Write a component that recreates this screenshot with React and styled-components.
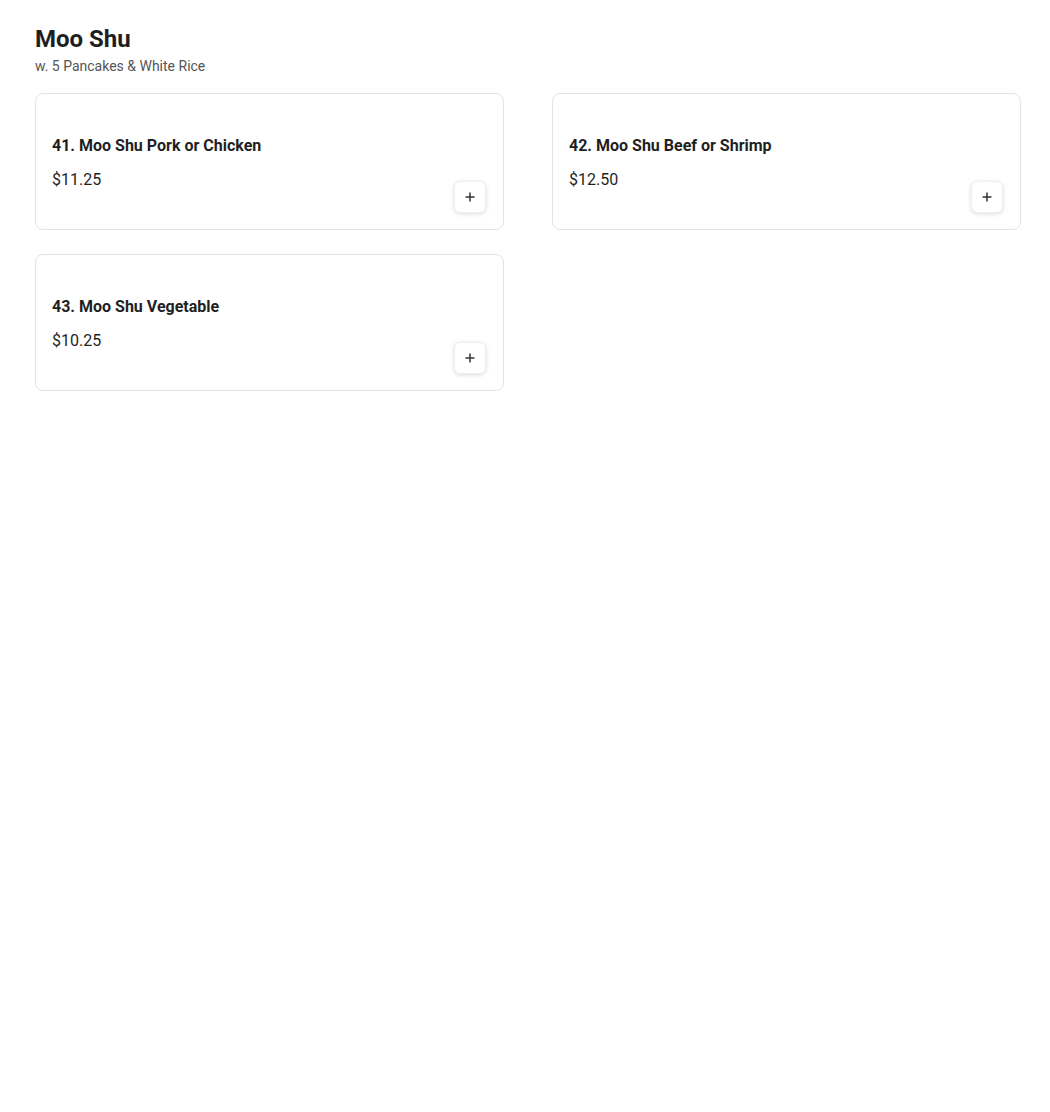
import React from 'react';
import styled, {createGlobalStyle} from 'styled-components';

const GlobalStyle = createGlobalStyle`
    * {
        box-sizing: border-box;
    }
    body {
        margin: 0;
        background: #fff;
        font-family: Roboto, "Liberation Sans", Arial, sans-serif;
        color: #1f1f1f;
    }
`;

const items = [
    {id: 41, name: 'Moo Shu Pork or Chicken', price: '$11.25'},
    {id: 42, name: 'Moo Shu Beef or Shrimp', price: '$12.50'},
    {id: 43, name: 'Moo Shu Vegetable', price: '$10.25'},
];

const Page = styled.div`
    width: 1021px;
    padding: 25px 0 0 35px;
`;

const Header = styled.header`
    margin-bottom: 17px;
`;

const Title = styled.h1`
    margin: 0 0 2px;
    font-size: 24px;
    line-height: 1.2;
    font-weight: 700;
    color: #1f1f1f;
`;

const Subtitle = styled.p`
    margin: 0;
    font-size: 14px;
    line-height: 20px;
    color: #555;
`;

const Grid = styled.div`
    display: grid;
    grid-template-columns: 1fr 1fr;
    column-gap: 48px;
    row-gap: 24px;
`;

const Card = styled.div`
    display: flex;
    justify-content: space-between;
    align-items: flex-end;
    min-height: 137px;
    padding: 16px;
    border: 1px solid #e3e3e3;
    border-radius: 8px;
    background: #fff;
`;

const Info = styled.div`
    padding-top: 24px;
    align-self: flex-start;
`;

const ItemName = styled.h3`
    margin: 0 0 10px;
    font-size: 16px;
    line-height: 24px;
    font-weight: 700;
    color: #1f1f1f;
`;

const Price = styled.div`
    font-size: 16px;
    line-height: 24px;
    color: #1f1f1f;
`;

const AddButton = styled.button`
    display: flex;
    align-items: center;
    justify-content: center;
    width: 32px;
    height: 32px;
    margin-right: 1px;
    padding: 0;
    border: 1px solid #efefef;
    border-radius: 6px;
    background: #fff;
    box-shadow: 0 1px 4px rgba(0, 0, 0, 0.14);
    cursor: pointer;
`;

const PlusIcon = () => (
    <svg width="12" height="12" viewBox="0 0 12 12" fill="none">
        <path d="M6 1.5v9M1.5 6h9" stroke="#333" strokeWidth="1.5" />
    </svg>
);

export default function App() {
    return (
        <Page>
            <GlobalStyle />
            <Header>
                <Title>Moo Shu</Title>
                <Subtitle>w. 5 Pancakes &amp; White Rice</Subtitle>
            </Header>
            <Grid>
                {items.map(item => (
                    <Card key={item.id}>
                        <Info>
                            <ItemName>{item.id}. {item.name}</ItemName>
                            <Price>{item.price}</Price>
                        </Info>
                        <AddButton aria-label={'Add ' + item.name}>
                            <PlusIcon />
                        </AddButton>
                    </Card>
                ))}
            </Grid>
        </Page>
    );
}
